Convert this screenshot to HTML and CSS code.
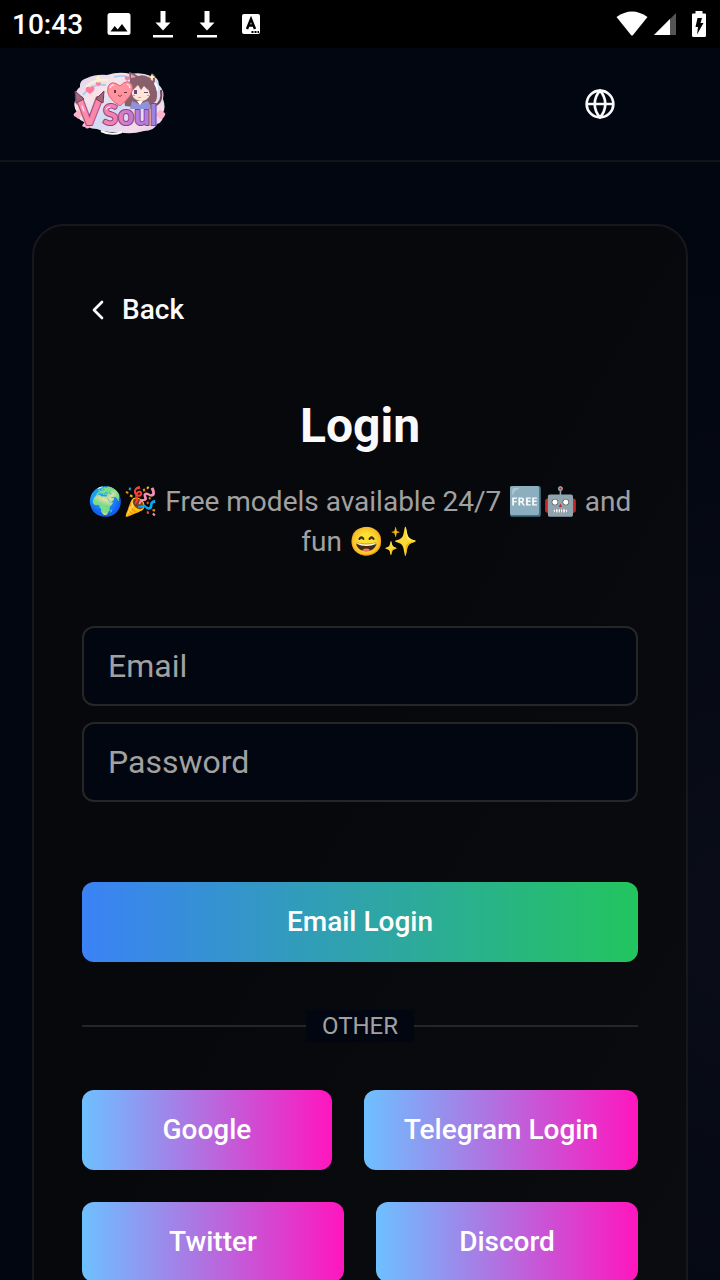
FILE: index.html
```
<!DOCTYPE html>
<html lang="en">
<head>
    <meta charset="UTF-8">
    <meta name="viewport" content="width=device-width, initial-scale=1.0">
    <title>VSoul - Login</title>
    <link rel="stylesheet" href="styles.css">
</head>
<body>

<div class="screen">
    <!-- Status bar -->
    <div class="status-bar">
        <span class="clock">10:43</span>
        <svg class="status-icon" width="24" height="24" viewBox="0 0 24 24">
            <path fill="#fff" fill-rule="evenodd" d="M3 1h18q2.500 0 2.500 2.500v17q0 2.500-2.500 2.500H3Q.5 23 .5 20.500v-17Q.5 1 3 1zM3.500 19.500h17l-5.500-7.500-4.300 5.500-3-3.600z"/>
        </svg>
        <svg class="status-icon" width="24" height="28" viewBox="0 0 24 28">
            <path fill="#fff" d="M9.500 1h5v11.500h5L12 20.500l-7.500-8h5zM2 25h20v2.500H2z"/>
        </svg>
        <svg class="status-icon" width="24" height="28" viewBox="0 0 24 28">
            <path fill="#fff" d="M9.500 1h5v11.500h5L12 20.500l-7.500-8h5zM2 25h20v2.500H2z"/>
        </svg>
        <svg class="status-icon" width="24" height="24" viewBox="0 0 24 24">
            <rect x="3" y="2" width="18" height="20" rx="2" fill="#fff"/>
            <path fill="none" stroke="#000" stroke-width="2.500" d="M8 17l4-10 4 10M9.500 13.500h5"/>
            <path fill="#000" d="M12.500 19h2v2h-2zM15.500 19h2v2h-2zM18.500 19h1.500v2h-1.500z"/>
        </svg>
        <div class="status-right">
            <svg width="32" height="26" viewBox="0 0 32 26">
                <path fill="#fff" d="M.5 6Q16-5 31.500 6L17 24q-1 1.200-2 0z"/>
            </svg>
            <svg width="24" height="24" viewBox="0 0 24 24">
                <path fill="#555" d="M23 1v22H1z"/>
                <path fill="#fff" d="M17 7v16H1z"/>
            </svg>
            <svg class="battery" width="14" height="28" viewBox="0 0 14 28">
                <path fill="#fff" d="M3.500 1h7v2.500H13q1 0 1 1V25.500q0 1.500-1.500 1.500h-11Q0 27 0 25.500v-21q0-1 1-1h2.500z"/>
                <path fill="#000" d="M5.500 8h4.500l-1.500 5h3L5 24.500 6 17H3.500z"/>
            </svg>
        </div>
    </div>

    <!-- Header -->
    <header class="header">
        <a class="logo" href="#" aria-label="VSoul">
            <svg width="96" height="72" viewBox="0 0 96 72">
                <defs>
                    <linearGradient id="cloud" x1="0" y1="0" x2="1" y2="1">
                        <stop offset="0" stop-color="#d7d2f2"/>
                        <stop offset=".3" stop-color="#f8e3e8"/>
                        <stop offset=".55" stop-color="#cfdcf5"/>
                        <stop offset=".8" stop-color="#f6dbe9"/>
                        <stop offset="1" stop-color="#d5c4ee"/>
                    </linearGradient>
                    <linearGradient id="letters" gradientUnits="userSpaceOnUse" x1="4" y1="0" x2="88" y2="0">
                        <stop offset="0" stop-color="#ff8fa6"/>
                        <stop offset=".45" stop-color="#f57fb0"/>
                        <stop offset=".65" stop-color="#c27ad8"/>
                        <stop offset="1" stop-color="#9285e4"/>
                    </linearGradient>
                </defs>
                <path fill="url(#cloud)" d="M8 17q0-5 7-7 9-4 20-3 12-4 24-1 10-2 20 2 8 1 8 9 6 6 4 14 3 8 0 14 1 9-6 11-3 7-13 7-14 4-25 1-12 1-22-3-11 0-13-7-8-3-7-10-5-7-1-13-2-8 4-12z"/>
                <path fill="none" stroke="#faf3cf" stroke-width="2" d="M14 19q9-9 22-7"/>
                <path fill="none" stroke="#aecbf5" stroke-width="2" d="M11 27q8-12 23-10M42 9q12-3 18 2"/>
                <path fill="none" stroke="#fff" stroke-width="2" d="M29 63q10 5 21 1M77 12q9 2 8 11"/>
                <!-- cat girl -->
                <path fill="none" stroke="#704354" stroke-width="2" d="M82 38q9-3 7-16"/>
                <path fill="#8a5f6c" d="M58 13l-1-9q5 1 9 4 6-2 10 1l6-3q2 5 0 10 5 8 2 17l-8 7-14-1-9-1q-3-14 5-25z"/>
                <path fill="#f2a6ae" d="M59 10V6l5 3zM78 11l3-3v5z"/>
                <path fill="#ffe5d8" d="M60 19l6-4 9 2 3 10q-3 6-9 6-8-1-9-7z"/>
                <path fill="#8a5f6c" d="M59 18l8-5 12 5-3 4-4-4-3 4-3-5-6 6z"/>
                <path fill="#5f497e" d="M62 22h3v4h-3zM72 24h4v1h-4z"/>
                <path fill="#ef8f9c" d="M66 29h3v1h-3zM61 27h2v1h-2zM75 27h2v1h-2z"/>
                <path fill="#8e93db" d="M60 33l7 3 9-3 4 8H58z"/>
                <path fill="#fff" d="M65 33h6l-3 4z"/>
                <!-- heart -->
                <path fill="#ff949f" stroke="#d4677f" d="M48 38Q33 29 36 19q3-8 12-1 8-8 12-1 3 9-12 21z"/>
                <path fill="none" stroke="#fff" d="M38 20q1-4 4-3M55 16q3 1 3 4"/>
                <path fill="#65354b" d="M42 22h2v3h-2zM52 24h3v1h-3z"/>
                <path fill="none" stroke="#9b3c54" d="M46 27q2 3 4 0"/>
                <!-- small hearts and petals -->
                <path fill="#ff7998" d="M18 26q-7-4-3-7 2-1 3 1 1-3 4-1 2 3-4 7zM26 18q-4-3-1-4l1 1q3-2 3 1zM55 13q-4-3-1-5l1 1q4-1 3 2zM5 37q-3-3 0-4l2 1q2 0-2 3z"/>
                <path fill="#ffb3c8" d="M4 44q2-4 4 0 5 0 1 4-2 5-5 1-5-2 0-5zM12 55q3-4 5 0 5 1 1 4-3 3-5 0-5 0-1-4zM86 44q2-4 5 0 4 1 1 5-3 4-6 0-4-2 0-5z"/>
                <path fill="#fff7be" d="M80 5l1 3 3 1-3 1-1 3-1-3-3-1 3-1zM26 7l1 2 2 1-2 1-1 2-1-2-2-1 2-1z"/>
                <text class="logo-text" x="4" y="57" fill="url(#letters)"><tspan class="logo-v">V</tspan>Soul</text>
                <!-- ears on top of the V -->
                <path fill="#a26677" stroke="#6f3d54" d="M4 35l-1-12 9 8zM24 31l8-8-1 12z"/>
                <path fill="none" stroke="#fff" stroke-linecap="round" d="M10 38l2 5M34 41q1-2 4-2"/>
            </svg>
        </a>
        <button class="lang-btn" type="button" aria-label="Language">
            <svg width="32" height="32" viewBox="0 0 24 24" fill="none" stroke="currentColor" stroke-width="2">
                <circle cx="12" cy="12" r="10"/>
                <path d="M2 12h20M12 2a15.300 15.300 0 0 1 4 10 15.300 15.300 0 0 1-4 10 15.300 15.300 0 0 1-4-10 15.300 15.300 0 0 1 4-10z"/>
            </svg>
        </button>
    </header>

    <!-- Login card -->
    <main class="content">
        <div class="card">
            <button class="back-btn" type="button">
                <svg width="32" height="32" viewBox="0 0 24 24" fill="none" stroke="currentColor" stroke-width="2" stroke-linecap="round" stroke-linejoin="round">
                    <path d="m15 18-6-6 6-6"/>
                </svg>
                Back
            </button>

            <h1>Login</h1>
            <p class="description">🌍🎉 Free models available 24/7 🆓🤖 and fun 😄✨</p>

            <form>
                <div class="fields">
                    <input type="email" class="input" placeholder="Email" aria-label="Email">
                    <input type="password" class="input" placeholder="Password" aria-label="Password">
                </div>
                <button class="btn btn-email" type="button">Email Login</button>
            </form>

            <div class="divider"><span>OTHER</span></div>

            <div class="providers">
                <div class="provider-row">
                    <button class="btn btn-provider" type="button">Google</button>
                    <button class="btn btn-provider" type="button">Telegram Login</button>
                </div>
                <div class="provider-row">
                    <button class="btn btn-provider" type="button">Twitter</button>
                    <button class="btn btn-provider" type="button">Discord</button>
                </div>
            </div>
        </div>
    </main>
</div>

</body>
</html>
```
FILE: styles.css
```
* {
    box-sizing: border-box;
}
body {
    margin: 0;
    background-color: #020610;
    color: #fafafa;
    font-family: Roboto, "Noto Color Emoji", sans-serif;
    font-size: 28px;
}
button,
input {
    font-family: inherit;
    color: inherit;
}
button {
    border: none;
    background: none;
    cursor: pointer;
    font-size: 28px;
    line-height: 40px;
    font-weight: 500;
}
svg {
    display: block;
    flex-shrink: 0;
}
.screen {
    display: flex;
    flex-direction: column;
    height: 100vh;
    overflow: hidden;
    background: radial-gradient(ellipse 45% 50% at 100% 72%, #0a0d17, #020610);
}

/* Status bar */
.status-bar {
    display: flex;
    align-items: center;
    flex-shrink: 0;
    gap: 20px;
    height: 48px;
    padding: 0 14px 0 12px;
    background: #000;
}
.clock {
    margin-right: 4px;
    color: #fff;
    font-weight: 500;
}
.status-right {
    display: flex;
    align-items: center;
    gap: 5px;
    margin-left: auto;
}
.battery {
    margin-left: 10px;
}

/* Header */
.header {
    display: flex;
    align-items: center;
    justify-content: space-between;
    flex-shrink: 0;
    height: 114px;
    padding: 0 72px;
    border-bottom: 2px solid #101318;
}
.logo-text {
    font-family: Lato, sans-serif;
    font-size: 28px;
    font-weight: 900;
    stroke: #95407c;
    stroke-width: 2px;
    stroke-linejoin: round;
    paint-order: stroke;
}
.logo-v {
    font-size: 38px;
}
.lang-btn {
    display: flex;
    align-items: center;
    justify-content: center;
    width: 96px;
    height: 80px;
    padding: 0;
}

/* Card */
.content {
    flex: 1;
    padding: 62px 32px;
}
.card {
    padding: 48px;
    border: 2px solid #17181b;
    border-radius: 32px;
    background: linear-gradient(120deg, #07080c 45%, #0b0c10);
}
.back-btn {
    display: flex;
    align-items: center;
    gap: 8px;
    height: 72px;
    padding: 0;
}
h1 {
    margin: 48px 0 24px;
    font-size: 48px;
    line-height: 64px;
    font-weight: 700;
    text-align: center;
}
.description {
    margin: 0 0 64px;
    line-height: 40px;
    color: #a1a1a1;
    text-align: center;
}
.fields {
    display: flex;
    flex-direction: column;
    gap: 16px;
    margin-bottom: 80px;
}
.input {
    width: 100%;
    height: 80px;
    padding: 0 24px;
    border: 2px solid #262626;
    border-radius: 12px;
    background: #020610;
    font-size: 32px;
}
.input::placeholder {
    color: #a1a1a1;
    opacity: 1;
}
.btn {
    height: 80px;
    padding: 0 40px;
    border-radius: 12px;
    color: #fff;
    white-space: nowrap;
}
.btn-email {
    width: 100%;
    background: linear-gradient(to right, #3b82f6, #22c55e);
}
.divider {
    display: flex;
    align-items: center;
    margin: 48px 0;
    color: #a1a1a1;
    font-size: 24px;
    line-height: 32px;
}
.divider::before,
.divider::after {
    content: "";
    flex: 1;
    height: 2px;
    background: #262626;
}
.divider span {
    padding: 0 16px;
    background: #020610;
}
.providers {
    display: flex;
    flex-direction: column;
    gap: 32px;
}
.provider-row {
    display: flex;
    gap: 32px;
}
.btn-provider {
    flex: 1;
    background: linear-gradient(to right, #6dc0ff, #ff16be);
}
```
